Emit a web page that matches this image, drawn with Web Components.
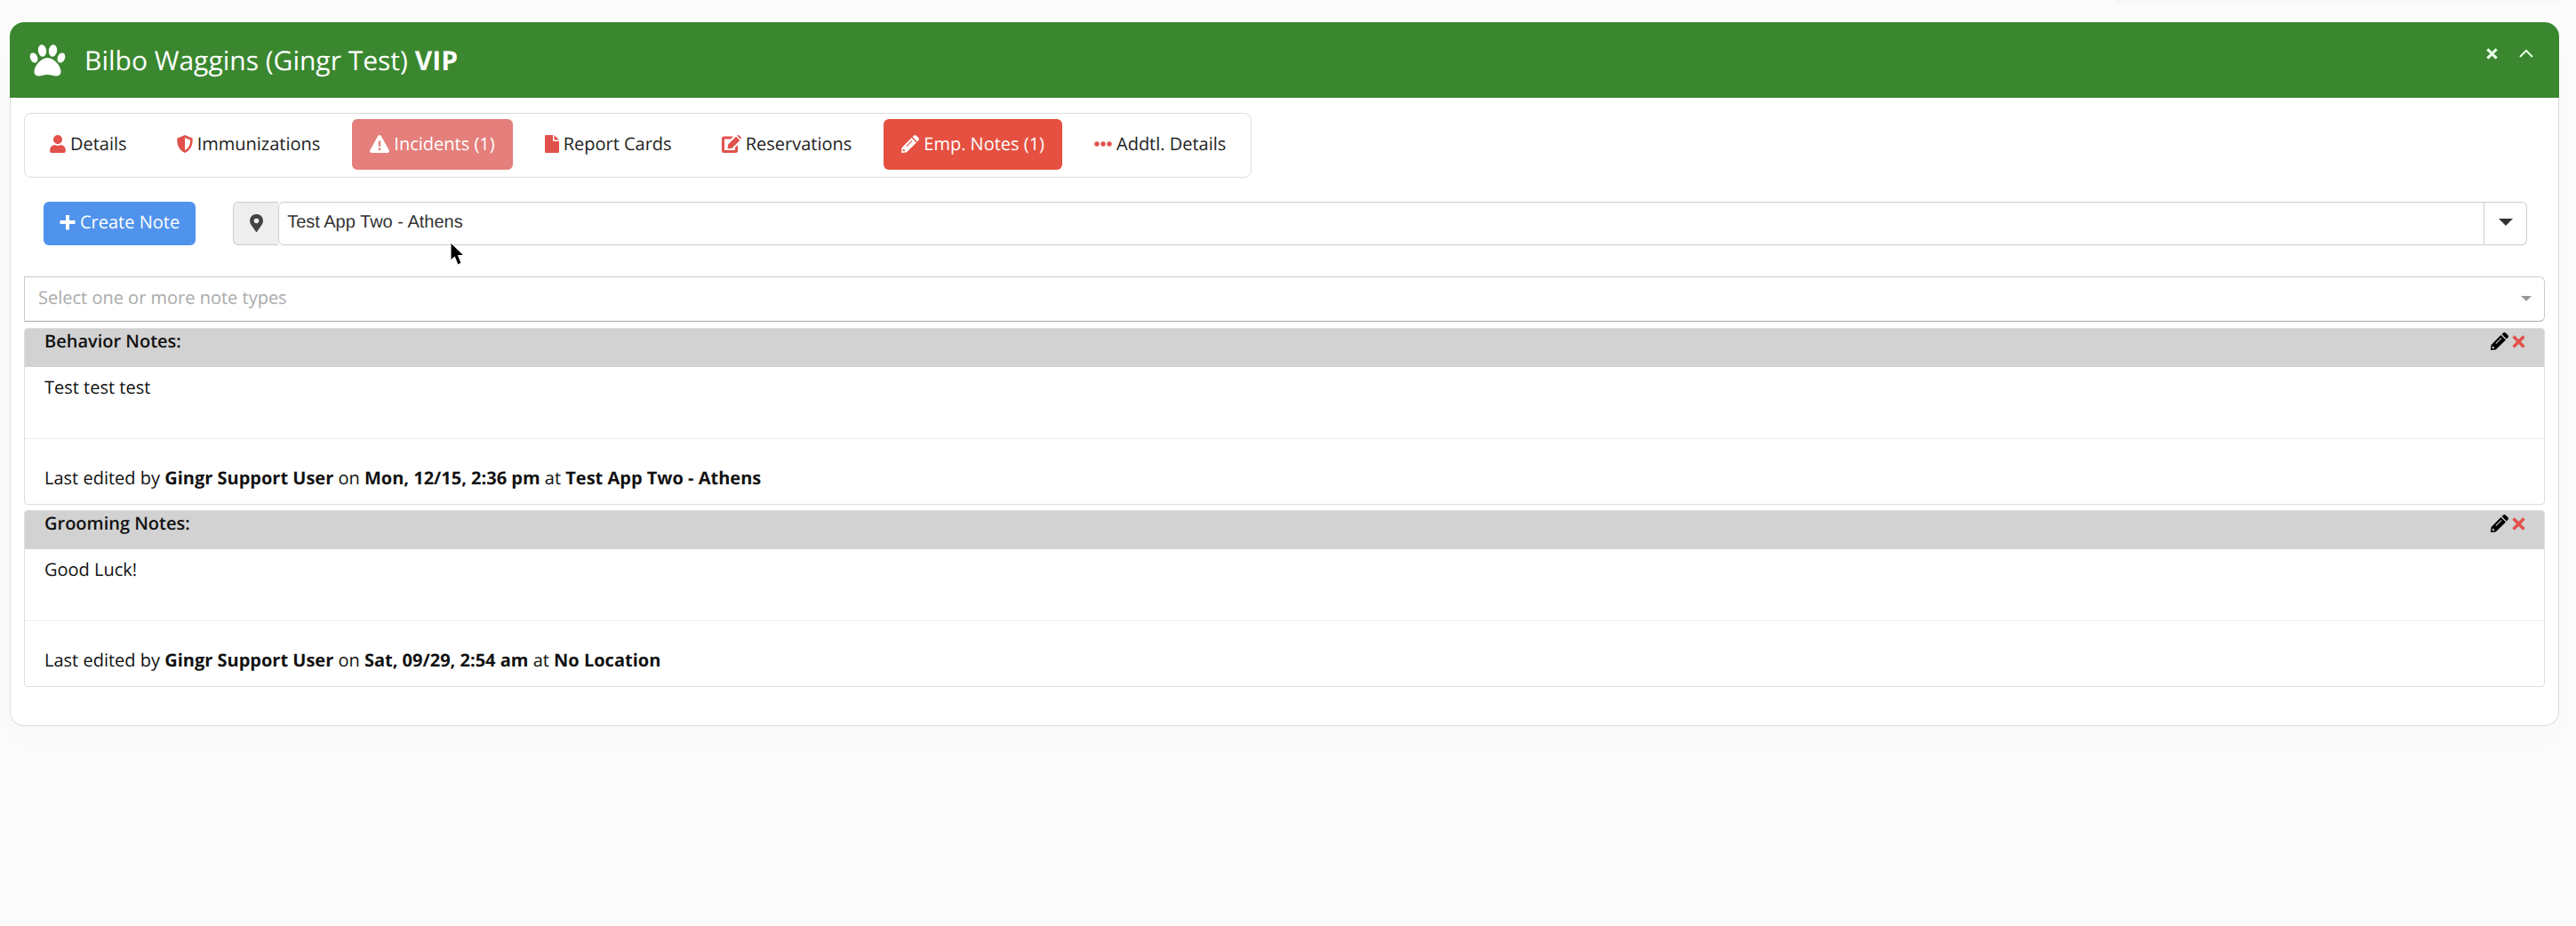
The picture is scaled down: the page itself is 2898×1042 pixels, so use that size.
<!DOCTYPE html>
<html lang="en">
<head>
<meta charset="utf-8">
<title>Bilbo Waggins - Employee Notes</title>
<style>
  body {
    margin: 0;
    min-height: 100vh;
    padding: 25px 19px 25px 11px;
    box-sizing: border-box;
    color: #222;
    font: 20px/28px "Open Sans", "Noto Sans", sans-serif;
    text-rendering: geometricPrecision;
    background: #fbfbfb linear-gradient(#f5f5f5, #fbfbfb) right 18px top / 500px 6px no-repeat;
  }
  .toolbar {
    display: flex;
    gap: 42px;
    padding: 27px 20px 35px 22px;
  }
  location-select {
    flex: 1;
  }
  mouse-pointer {
    position: absolute;
    left: 506px;
    top: 272px;
  }
</style>
</head>
<body>
<animal-panel>
  <span slot="title">Bilbo Waggins (Gingr Test) <b>VIP</b></span>
  <tab-bar>
    <tab-item icon="user">Details</tab-item>
    <tab-item icon="shield">Immunizations</tab-item>
    <tab-item icon="warning" variant="alert">Incidents (1)</tab-item>
    <tab-item icon="file">Report Cards</tab-item>
    <tab-item icon="edit">Reservations</tab-item>
    <tab-item icon="pencil" variant="active">Emp. Notes (1)</tab-item>
    <tab-item icon="dots">Addtl. Details</tab-item>
  </tab-bar>
  <div class="toolbar">
    <create-button>Create Note</create-button>
    <location-select value="Test App Two - Athens"></location-select>
  </div>
  <type-select placeholder="Select one or more note types"></type-select>
  <note-card>
    <span slot="type">Behavior Notes:</span>
    Test test test
    <span slot="edited">Last edited by <b>Gingr Support User</b> on <b>Mon, 12/15, 2:36 pm</b> at <b>Test App Two - Athens</b></span>
  </note-card>
  <note-card>
    <span slot="type">Grooming Notes:</span>
    Good Luck!
    <span slot="edited">Last edited by <b>Gingr Support User</b> on <b>Sat, 09/29, 2:54 am</b> at <b>No Location</b></span>
  </note-card>
</animal-panel>
<mouse-pointer></mouse-pointer>

<script>
const ICONS = {
  paw: ['0 0 40 36', '<ellipse cx="14" cy="7" rx="4.6" ry="6.8" transform="rotate(-8 14 7)"/><ellipse cx="26" cy="7" rx="4.6" ry="6.8" transform="rotate(8 26 7)"/><ellipse cx="4.6" cy="15" rx="4.100" ry="5.8" transform="rotate(-22 4.6 15)"/><ellipse cx="35.4" cy="15" rx="4.100" ry="5.8" transform="rotate(22 35.4 15)"/><path d="M20 15C13 15 5 24 5 30.500C5 34.500 8 36 11.500 35.500C15 35 17 34 20 34S25 35 28.500 35.500C32 36 35 34.500 35 30.500C35 24 27 15 20 15Z"/>'],
  user: ['0 0 448 512', '<path d="M224 256c70.700 0 128-57.300 128-128S294.700 0 224 0 96 57.300 96 128s57.300 128 128 128zm90 32h-17c-22 10-47 16-73 16s-51-6-73-16h-17C60 288 0 348 0 422v42c0 26 22 48 48 48h352c26 0 48-22 48-48v-42c0-74-60-134-134-134z"/>'],
  shield: ['0 0 18 20', '<path fill-rule="evenodd" d="M9 0L17.500 3.500C18.500 11 15 17.500 9 20C3 17.500 -.5 11 .5 3.500ZM9 3V17C13 15 15.500 10.500 15 5.400Z"/>'],
  warning: ['0 0 22 20', '<path fill-rule="evenodd" d="M11 0C11.800 0 12.400 .4 12.800 1.100L21.700 17C22.500 18.500 21.500 20 20 20H2C.5 20-.5 18.500 .3 17L9.200 1.100C9.600 .4 10.200 0 11 0ZM9.700 6.500L10 13H12L12.300 6.500ZM11 14.300A1.500 1.500 0 1 0 11 17.300A1.500 1.500 0 1 0 11 14.300Z"/>'],
  file: ['0 0 16 20', '<path d="M0 1Q0 0 1 0H9V6Q9 7 10 7H16V19Q16 20 15 20H1Q0 20 0 19ZM10.500 0L16 5.500H10.500Z"/>'],
  edit: ['0 0 22 20', '<path d="M13 1.500H2.500Q0 1.500 0 4V17.500Q0 20 2.500 20H15.500Q18 20 18 17.500V11L15 14V17H3V4.500H10ZM16 1.700L20.300 6L11.500 14.800L6.500 15.500L7.200 10.500ZM17.200 .6L18 .2Q18.800-.3 19.700 .5L21.500 2.300Q22.200 3.100 21.600 4L21.200 4.700Z"/>'],
  pencil: ['0 0 20 20', '<path fill-rule="evenodd" d="M11.500 3L17 8.500L5.700 19.500L0 20L.5 14.300ZM1.900 16L1.700 17.400L2.600 18.300L4 18.100L4.300 16.700L3.300 16.700L3.300 15.700ZM11.700 6L5.500 12.200L6.200 12.900L12.400 6.700ZM12.500 2.100L14 .7Q15.500-.6 16.900 .7L19.300 3.100Q20.600 4.500 19.300 6L17.900 7.500Z"/>'],
  dots: ['0 0 20 20', '<circle cx="3" cy="10" r="2.700"/><circle cx="10" cy="10" r="2.700"/><circle cx="17" cy="10" r="2.700"/>'],
  plus: ['0 0 18 18', '<path d="M7 1H11V7H17.500V11H11V17.500H7V11H.5V7H7Z"/>'],
  pin: ['0 0 15 20', '<path fill-rule="evenodd" d="M7.500 0A7.300 7.300 0 0 1 15 7.400C15 11 11.500 14.500 8.300 19.500Q7.500 20.500 6.700 19.500C3.500 14.500 0 11 0 7.400A7.300 7.300 0 0 1 7.500 0ZM7.500 4.700A2.800 2.800 0 1 0 7.500 10.300A2.800 2.800 0 1 0 7.500 4.700Z"/>'],
  close: ['0 0 14 14', '<path d="M2.600 .3L7 4.700L11.400 .3L13.700 2.600L9.300 7L13.700 11.400L11.400 13.700L7 9.300L2.600 13.700L.3 11.400L4.700 7L.3 2.600Z"/>'],
  chevron: ['0 0 16 10', '<path d="M1 9L8 2L15 9" fill="none" stroke="currentColor" stroke-width="2"/>'],
  caret: ['0 0 16 8', '<path d="M0 0H16L8 8Z"/>']
};

function icon(name, width, height) {
  const [viewBox, shapes] = ICONS[name];
  return `<svg width="${width}" height="${height}" viewBox="${viewBox}" fill="currentColor" aria-hidden="true">${shapes}</svg>`;
}

class BaseElement extends HTMLElement {
  connectedCallback() {
    if (this.shadowRoot) {
      return;
    }
    this.attachShadow({ mode: 'open' });
    const template = document.createElement('template');
    template.innerHTML = this.getTemplate();
    this.shadowRoot.appendChild(template.content.cloneNode(true));
  }
}

class AnimalPanel extends BaseElement {
  getTemplate() {
    return `
      <style>
        :host {
          display: block;
          border-radius: 16px;
          background: #fff;
          box-shadow: 0 20px 40px rgba(0, 0, 0, 0.01);
        }
        header {
          display: flex;
          align-items: center;
          height: 85px;
          box-sizing: border-box;
          padding: 0 29px 0 22px;
          border-radius: 16px 16px 0 0;
          color: #fff;
          background: #3a872f;
        }
        h1 {
          flex: 1;
          margin: 0 0 0 21px;
          font-size: 30px;
          line-height: 40px;
          font-weight: 400;
        }
        .tools {
          display: flex;
          gap: 24px;
          align-self: flex-start;
          padding-top: 28px;
        }
        button {
          display: flex;
          align-items: center;
          height: 14px;
          padding: 0;
          border: 0;
          color: #e8ffe6;
          background: none;
        }
        .body {
          padding: 17px 15px 37px;
          border: 1px solid #ddd;
          border-top: 0;
          border-radius: 0 0 16px 16px;
        }
      </style>
      <header>
        ${icon('paw', 41, 36)}
        <h1><slot name="title"></slot></h1>
        <div class="tools">
          <button aria-label="Close">${icon('close', 13, 13)}</button>
          <button aria-label="Collapse">${icon('chevron', 16, 10)}</button>
        </div>
      </header>
      <div class="body"><slot></slot></div>
    `;
  }
}

class TabBar extends BaseElement {
  getTemplate() {
    return `
      <style>
        :host { display: flex; }
        nav {
          display: flex;
          gap: 16px;
          padding: 6px 8px 8px;
          border: 1px solid #ddd;
          border-radius: 8px;
        }
      </style>
      <nav><slot></slot></nav>
    `;
  }
}

class TabItem extends BaseElement {
  getTemplate() {
    const sizes = { user: 18, shield: 18, warning: 22, file: 16, edit: 22, pencil: 20, dots: 20 };
    const name = this.getAttribute('icon');
    return `
      <style>
        :host { display: block; }
        a {
          display: flex;
          align-items: center;
          gap: 5px;
          height: 57px;
          box-sizing: border-box;
          padding: 0 20px 2px;
          border-radius: 6px;
          color: #222;
          text-decoration: none;
          white-space: nowrap;
        }
        svg { color: #e2514b; }
        :host([variant]) a,
        :host([variant]) svg { color: #fff; }
        :host([variant="alert"]) a { background: #e47f7c; }
        :host([variant="active"]) a { background: #e55040; }
      </style>
      <a href="#">${icon(name, sizes[name], 20)}<span><slot></slot></span></a>
    `;
  }
}

class CreateButton extends BaseElement {
  getTemplate() {
    return `
      <style>
        :host { display: block; }
        button {
          display: flex;
          align-items: center;
          gap: 5px;
          height: 49px;
          padding: 0 18px 3px;
          border: 0;
          border-radius: 6px;
          color: #fff;
          background: #5093ed;
          font: inherit;
          text-rendering: inherit;
        }
      </style>
      <button>${icon('plus', 18, 18)}<span><slot></slot></span></button>
    `;
  }
}

class LocationSelect extends BaseElement {
  getTemplate() {
    return `
      <style>
        :host {
          display: flex;
          height: 49px;
        }
        label, button {
          display: flex;
          align-items: center;
          justify-content: center;
          box-sizing: border-box;
          border: 1px solid #ccc;
        }
        label {
          width: 51px;
          padding-bottom: 2px;
          border-right: 0;
          border-radius: 6px 0 0 6px;
          color: #444;
          background: #eee;
        }
        input {
          flex: 1;
          min-width: 0;
          box-sizing: border-box;
          padding: 0 9px 2px;
          border: 1px solid #ccc;
          border-radius: 6px 0 0 6px;
          color: #333;
          background: #fff;
          font: 20px "Liberation Sans", Arial, sans-serif;
          text-rendering: inherit;
        }
        button {
          width: 48px;
          padding: 0 0 4px;
          border-left: 0;
          border-radius: 0 6px 6px 0;
          color: #333;
          background: #fff;
        }
      </style>
      <label for="location" aria-label="Location">${icon('pin', 15, 20)}</label>
      <input id="location" type="text" value="${this.getAttribute('value')}">
      <button aria-label="Show locations">${icon('caret', 16, 8)}</button>
    `;
  }
}

class TypeSelect extends BaseElement {
  getTemplate() {
    return `
      <style>
        :host {
          display: grid;
          align-items: center;
          height: 51px;
          margin-bottom: 7px;
        }
        select, svg { grid-area: 1 / 1; }
        select {
          appearance: none;
          width: 100%;
          height: 51px;
          box-sizing: border-box;
          padding: 0 15px 3px;
          border: 1px solid #ccc;
          border-bottom-color: #aaa;
          border-radius: 0 6px 6px 0;
          color: #aaa;
          background: #fff;
          font: inherit;
          text-rendering: inherit;
        }
        svg {
          justify-self: end;
          margin: 0 15px 2px 0;
          color: #999;
          pointer-events: none;
        }
      </style>
      <select aria-label="Note types"><option>${this.getAttribute('placeholder')}</option></select>
      ${icon('caret', 12, 6)}
    `;
  }
}

class NoteCard extends BaseElement {
  getTemplate() {
    return `
      <style>
        :host {
          display: block;
          margin-bottom: 6px;
          border: 1px solid #ddd;
          border-radius: 4px;
          box-sizing: border-box;
          overflow: hidden;
          color: #111;
        }
        header {
          display: flex;
          height: 43px;
          padding: 0 21px 0 22px;
          background: #d2d2d2;
        }
        h2 {
          flex: 1;
          margin: 0;
          font-size: 20px;
          line-height: 28px;
          font-weight: 600;
        }
        .actions {
          display: flex;
          gap: 4px;
          height: 28px;
          align-items: center;
        }
        button {
          display: flex;
          padding: 0;
          border: 0;
          color: #000;
          background: none;
        }
        .delete { color: #e2514b; }
        .text {
          min-height: 71px;
          padding: 9px 22px 0;
        }
        footer {
          padding: 30px 22px 15px;
          border-top: 1px solid #eee;
        }
      </style>
      <header>
        <h2><slot name="type"></slot></h2>
        <div class="actions">
          <button aria-label="Edit note">${icon('pencil', 20, 20)}</button>
          <button class="delete" aria-label="Delete note">${icon('close', 15, 15)}</button>
        </div>
      </header>
      <div class="text"><slot></slot></div>
      <footer><slot name="edited"></slot></footer>
    `;
  }
}

class MousePointer extends BaseElement {
  getTemplate() {
    return `
      <style>
        :host {
          display: block;
          pointer-events: none;
        }
        svg { display: block; }
      </style>
      <svg width="18" height="28" viewBox="0 0 18 28" aria-hidden="true">
        <path d="M1 1V21L5.500 17L9 26L13 24L9.500 15.500H16Z" fill="#000" stroke="#fff" stroke-width="1"/>
      </svg>
    `;
  }
}

customElements.define('animal-panel', AnimalPanel);
customElements.define('tab-bar', TabBar);
customElements.define('tab-item', TabItem);
customElements.define('create-button', CreateButton);
customElements.define('location-select', LocationSelect);
customElements.define('type-select', TypeSelect);
customElements.define('note-card', NoteCard);
customElements.define('mouse-pointer', MousePointer);
</script>
</body>
</html>
